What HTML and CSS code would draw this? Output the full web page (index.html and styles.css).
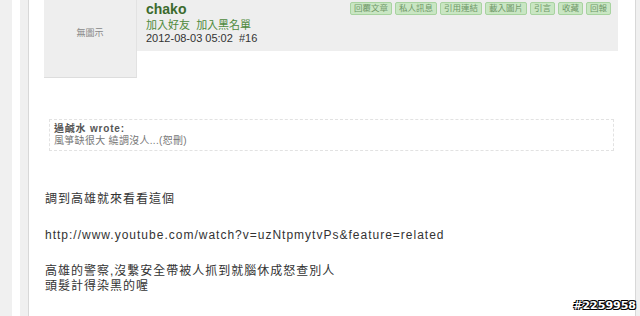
FILE: index.html
```html
<!DOCTYPE html>
<html lang="zh-Hant">
<head>
    <meta charset="UTF-8">
    <meta name="viewport" content="width=device-width, initial-scale=1.0">
    <title>chako #16</title>
    <link rel="stylesheet" href="styles.css">
</head>
<body>

    <div class="gutter">
        <div class="strip">
            <div class="main">

                <!-- Post header -->
                <div class="post-head">
                    <div class="avatar">無圖示</div>
                    <div class="info">
                        <div class="user">
                            <div class="name">chako</div>
                            <div class="links"><a href="#">加入好友</a>&nbsp; <a href="#">加入黑名單</a></div>
                            <div class="date">2012-08-03 05:02 &nbsp;#16</div>
                        </div>
                        <div class="tools">
                            <span class="btn">回覆文章</span>
                            <span class="btn">私人訊息</span>
                            <span class="btn">引用連結</span>
                            <span class="btn">載入圖片</span>
                            <span class="btn">引言</span>
                            <span class="btn">收藏</span>
                            <span class="btn">回報</span>
                        </div>
                    </div>
                </div>

                <!-- Quote -->
                <div class="quote">
                    <div class="quote-by">過鹹水 wrote:</div>
                    <div class="quote-text">風箏缺很大 繞調沒人...(恕刪)</div>
                </div>

                <!-- Body -->
                <div class="content">
                    <p>調到高雄就來看看這個</p>
                    <p>http://www.youtube.com/watch?v=uzNtpmytvPs&amp;feature=related</p>
                    <p>高雄的警察,沒繫安全帶被人抓到就腦休成怒查別人<br>頭髮計得染黑的喔</p>
                </div>

            </div>
        </div>
    </div>

    <div class="stamp">#2259958</div>

</body>
</html>
```

FILE: styles.css
```css
* {
    margin: 0;
    padding: 0;
    box-sizing: border-box;
}

body {
    background: #f0f0f0;
    height: 316px;
    overflow: hidden;
    font-family: "Liberation Sans", "Noto Sans CJK TC", sans-serif;
    color: #333;
    position: relative;
}

.gutter {
    padding-left: 12px;
}

.strip {
    background: #fff;
    padding-left: 8px;
    width: 624px;
}

.main {
    margin-left: 8px;
    width: 608px;
    height: 316px;
    background: #fff;
    border-left: 1px solid #d8d8d8;
    border-right: 1px solid #d8d8d8;
    box-shadow: -8px 0 0 #f0f0f0;
}

/* Post header */
.post-head {
    display: flex;
    padding-left: 15px;
}

.avatar {
    width: 93px;
    height: 78px;
    background: #eee;
    border-bottom: 1px solid #ddd;
    border-right: 1px solid #e2e2e2;
    display: flex;
    align-items: center;
    justify-content: center;
    font-size: 9px;
    color: #888;
    padding-bottom: 13px;
}

.info {
    width: 481px;
    height: 51px;
    background: #eee;
    display: flex;
    justify-content: space-between;
    padding: 0 7px 0 9px;
}

.name {
    font-size: 14px;
    font-weight: bold;
    color: #3b6a2d;
    line-height: 16px;
    margin-top: 1px;
}

.links {
    font-size: 11px;
    line-height: 13px;
    margin-top: 2px;
}

.links a {
    color: #4d8a3c;
    text-decoration: none;
}

.date {
    font-size: 11px;
    line-height: 13px;
    color: #333;
}

.tools {
    display: flex;
    gap: 3px;
    margin-top: 2px;
    align-items: flex-start;
}

.btn {
    font-size: 8.5px;
    line-height: 11px;
    padding: 0 3px;
    color: #6f9868;
    background: #c9e6c3;
    border: 1px solid #a8d3a0;
    border-radius: 2px;
}

/* Quote */
.quote {
    margin: 41px 0 0 20px;
    width: 565px;
    height: 32px;
    border: 1px dashed #e2e2e2;
    padding: 3px 4px;
    font-size: 10px;
    line-height: 12px;
    letter-spacing: 0.3px;
}

.quote-by {
    font-weight: bold;
    color: #555;
    letter-spacing: 0.8px;
}

.quote-text {
    color: #777;
}

/* Body */
.content {
    padding: 41px 0 0 16px;
    font-size: 12px;
    line-height: 15px;
    letter-spacing: 1px;
    color: #333;
}

.content p {
    margin-bottom: 21px;
}

.stamp {
    position: absolute;
    right: 4px;
    bottom: 4px;
    font-family: "DejaVu Sans", sans-serif;
    font-weight: bold;
    font-size: 11px;
    line-height: 13px;
    color: #fff;
    text-shadow: -1px -1px 0 #000, 1px -1px 0 #000, -1px 1px 0 #000, 1px 1px 0 #000;
}
```
